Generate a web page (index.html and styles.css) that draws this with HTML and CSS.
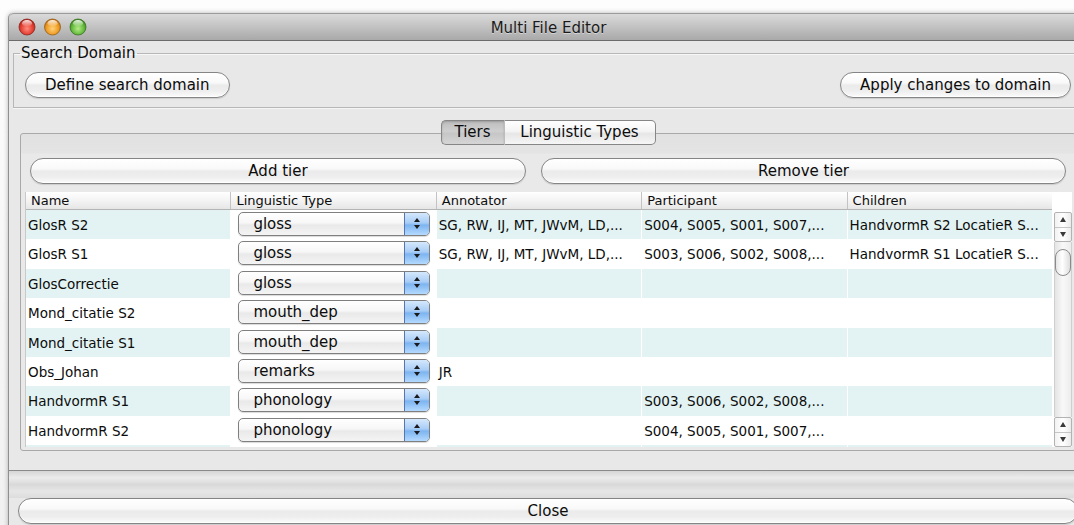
FILE: index.html
```html
<!DOCTYPE html>
<html>
<head>
<meta charset="utf-8">
<title>Multi File Editor</title>
<link rel="stylesheet" href="styles.css">
</head>
<body>
<div class="desktop">
  <div class="window">
    <div class="titlebar">
      <svg class="lights" width="72" height="18" viewBox="0 0 72 18">
        <defs>
          <radialGradient id="lr" cx="50%" cy="60%" r="60%">
            <stop offset="0" stop-color="#ff8a7c"/>
            <stop offset="0.65" stop-color="#e23c2f"/>
            <stop offset="1" stop-color="#a81d14"/>
          </radialGradient>
          <radialGradient id="ly" cx="50%" cy="60%" r="60%">
            <stop offset="0" stop-color="#ffd27a"/>
            <stop offset="0.65" stop-color="#ee9a22"/>
            <stop offset="1" stop-color="#b8690a"/>
          </radialGradient>
          <radialGradient id="lg" cx="50%" cy="60%" r="60%">
            <stop offset="0" stop-color="#b6ec8a"/>
            <stop offset="0.65" stop-color="#62b83a"/>
            <stop offset="1" stop-color="#347e1c"/>
          </radialGradient>
          <linearGradient id="shine" x1="0" y1="0" x2="0" y2="1">
            <stop offset="0" stop-color="#fff" stop-opacity="0.9"/>
            <stop offset="1" stop-color="#fff" stop-opacity="0.05"/>
          </linearGradient>
        </defs>
        <circle cx="9" cy="9" r="8" fill="url(#lr)" stroke="#8c2a22" stroke-width="0.8"/>
        <ellipse cx="9" cy="5.2" rx="5" ry="3.2" fill="url(#shine)"/>
        <circle cx="34.5" cy="9" r="8" fill="url(#ly)" stroke="#94601a" stroke-width="0.8"/>
        <ellipse cx="34.5" cy="5.2" rx="5" ry="3.2" fill="url(#shine)"/>
        <circle cx="60" cy="9" r="8" fill="url(#lg)" stroke="#3c7424" stroke-width="0.8"/>
        <ellipse cx="60" cy="5.2" rx="5" ry="3.2" fill="url(#shine)"/>
      </svg>
      <div class="title">Multi File Editor</div>
      <div></div>
    </div>

    <div class="content">
      <fieldset class="domain">
        <legend>Search Domain</legend>
        <div class="domain-row">
          <button class="aqua">Define search domain</button>
          <button class="aqua">Apply changes to domain</button>
        </div>
      </fieldset>

      <div class="tabbed">
        <div class="tabs">
          <span class="tab selected">Tiers</span>
          <span class="tab">Linguistic Types</span>
        </div>
        <div class="pane">
          <div class="pane-buttons">
            <button class="aqua add">Add tier</button>
            <button class="aqua remove">Remove tier</button>
          </div>

          <div class="table-wrap">
            <div class="thead">
              <div class="th">Name</div>
              <div class="th">Linguistic Type</div>
              <div class="th">Annotator</div>
              <div class="th">Participant</div>
              <div class="th">Children</div>
            </div>
            <div class="corner"></div>

            <div class="tbody">
              <div class="tr striped">
                <div class="td">GlosR S2</div>
                <div class="td combo-cell"><div class="combo"><span class="combo-text">gloss</span><span class="combo-arrows"></span></div></div>
                <div class="td">SG, RW, IJ, MT, JWvM, LD,...</div>
                <div class="td">S004, S005, S001, S007,...</div>
                <div class="td">HandvormR S2 LocatieR S...</div>
              </div>
              <div class="tr">
                <div class="td">GlosR S1</div>
                <div class="td combo-cell"><div class="combo"><span class="combo-text">gloss</span><span class="combo-arrows"></span></div></div>
                <div class="td">SG, RW, IJ, MT, JWvM, LD,...</div>
                <div class="td">S003, S006, S002, S008,...</div>
                <div class="td">HandvormR S1 LocatieR S...</div>
              </div>
              <div class="tr striped">
                <div class="td">GlosCorrectie</div>
                <div class="td combo-cell"><div class="combo"><span class="combo-text">gloss</span><span class="combo-arrows"></span></div></div>
                <div class="td"></div>
                <div class="td"></div>
                <div class="td"></div>
              </div>
              <div class="tr">
                <div class="td">Mond_citatie S2</div>
                <div class="td combo-cell"><div class="combo"><span class="combo-text">mouth_dep</span><span class="combo-arrows"></span></div></div>
                <div class="td"></div>
                <div class="td"></div>
                <div class="td"></div>
              </div>
              <div class="tr striped">
                <div class="td">Mond_citatie S1</div>
                <div class="td combo-cell"><div class="combo"><span class="combo-text">mouth_dep</span><span class="combo-arrows"></span></div></div>
                <div class="td"></div>
                <div class="td"></div>
                <div class="td"></div>
              </div>
              <div class="tr">
                <div class="td">Obs_Johan</div>
                <div class="td combo-cell"><div class="combo"><span class="combo-text">remarks</span><span class="combo-arrows"></span></div></div>
                <div class="td">JR</div>
                <div class="td"></div>
                <div class="td"></div>
              </div>
              <div class="tr striped">
                <div class="td">HandvormR S1</div>
                <div class="td combo-cell"><div class="combo"><span class="combo-text">phonology</span><span class="combo-arrows"></span></div></div>
                <div class="td"></div>
                <div class="td">S003, S006, S002, S008,...</div>
                <div class="td"></div>
              </div>
              <div class="tr">
                <div class="td">HandvormR S2</div>
                <div class="td combo-cell"><div class="combo"><span class="combo-text">phonology</span><span class="combo-arrows"></span></div></div>
                <div class="td"></div>
                <div class="td">S004, S005, S001, S007,...</div>
                <div class="td"></div>
              </div>
              <div class="tr striped">
                <div class="td"></div>
                <div class="td combo-cell"><div class="combo"><span class="combo-text"></span><span class="combo-arrows"></span></div></div>
                <div class="td"></div>
                <div class="td"></div>
                <div class="td"></div>
              </div>
            </div>

            <div class="vscroll">
              <div class="sb-arrows"><span class="sb-btn up"></span><span class="sb-btn down"></span></div>
              <div class="sb-track"><div class="sb-thumb"></div></div>
              <div class="sb-arrows"><span class="sb-btn up"></span><span class="sb-btn down"></span></div>
            </div>
          </div>
        </div>
      </div>

      <div class="divider"></div>

      <div class="footer">
        <button class="aqua close">Close</button>
      </div>
    </div>
  </div>
</div>
</body>
</html>
```

FILE: styles.css
```css
* {
  box-sizing: border-box;
}

html,
body {
  margin: 0;
  height: 100%;
}

body {
  overflow: hidden;
  background: linear-gradient(#fdfdfd, #f1f1f1);
  font-family: "DejaVu Sans", "Liberation Sans", sans-serif;
  color: #0c0c0c;
}

.desktop {
  padding: 13px 0 0 8px;
}

/* ---------- window frame ---------- */

.window {
  width: 1080px;
  height: 540px;
  border-left: 1px solid #8f8f8f;
  border-radius: 5px 5px 0 0;
  background: #e8e8e8;
  box-shadow: 0 0 5px rgba(0, 0, 0, 0.28);
  overflow: hidden;
}

.titlebar {
  display: grid;
  grid-template-columns: 1fr auto 1fr;
  align-items: center;
  height: 28px;
  border-top: 1px solid #9b9b9b;
  border-bottom: 1px solid #6c6c6c;
  border-radius: 5px 5px 0 0;
  background: linear-gradient(#dadada, #c4c4c4 45%, #a9a9a9);
}

.lights {
  display: block;
  margin-left: 9px;
}

.title {
  padding-top: 1px;
  font-size: 15px;
  color: #1a1a1a;
  text-shadow: 0 1px 0 rgba(255, 255, 255, 0.45);
}

/* ---------- search domain group ---------- */

.domain {
  margin: 3px 5px 0 4px;
  padding: 0 11px 9px;
  border: 1px solid #b7b7b7;
  box-shadow: inset 0 1px 0 #f7f7f7, 0 1px 0 #f6f6f6;
}

.domain legend {
  margin-left: -5px;
  padding: 0 1px;
  font-size: 15px;
  line-height: 19px;
}

.domain-row {
  display: flex;
  justify-content: space-between;
  margin-top: 9px;
}

/* ---------- aqua push buttons ---------- */

.aqua {
  height: 26px;
  padding: 0 19px;
  border: 1px solid #858585;
  border-radius: 13px;
  background: linear-gradient(#ffffff 0%, #f9f9f9 40%, #ebebeb 52%, #eeeeee 75%, #fbfbfb 100%);
  box-shadow: inset 0 -1px 0 #ffffff, 0 1px 1px rgba(0, 0, 0, 0.12);
  font-family: inherit;
  font-size: 15px;
  line-height: 22px;
  color: #0c0c0c;
}

/* ---------- tabbed pane ---------- */

.tabbed {
  margin: 12px 12px 0 11px;
}

.tabs {
  position: relative;
  z-index: 1;
  display: flex;
  justify-content: center;
}

.tab {
  height: 25px;
  border: 1px solid #868686;
  background: linear-gradient(#ffffff, #f4f4f4 45%, #e6e6e6 55%, #f6f6f6);
  font-size: 15px;
  line-height: 23px;
  text-align: center;
  color: #0c0c0c;
}

.tab + .tab {
  width: 152px;
  border-left: 1px solid #bdbdbd;
  border-radius: 0 5px 5px 0;
}

.tab.selected {
  width: 63px;
  border-right: none;
  border-radius: 5px 0 0 5px;
  background: linear-gradient(#bdbdbd, #cfcfcf 45%, #c6c6c6 55%, #d6d6d6);
  box-shadow: inset 0 1px 2px rgba(0, 0, 0, 0.18);
}

.pane {
  margin-top: -12px;
  padding: 24px 4px 3px;
  border: 1px solid #a9a9a9;
  border-radius: 3px;
  background: linear-gradient(#e1e1e1, #e4e4e4 19px, #e9e9e9 20px, #e9e9e9);
}

.pane-buttons {
  display: flex;
  gap: 15px;
  padding: 0 5px;
}

.pane-buttons .add {
  width: 496px;
}

.pane-buttons .remove {
  width: 525px;
}

/* ---------- tier table ---------- */

.table-wrap {
  display: grid;
  grid-template-columns: 1026px 20px;
  grid-template-rows: 18px 237px;
  margin-top: 8px;
  background: #ffffff;
  border-left: 1px solid #c9c9c9;
}

.thead {
  display: grid;
  grid-template-columns: repeat(5, 1fr);
  column-gap: 1px;
  background: #c3c3c3;
  border-bottom: 1px solid #b4b4b4;
}

.th {
  padding: 0 5px;
  background: linear-gradient(#ffffff, #f4f4f4 50%, #e6e6e6);
  font-size: 13px;
  line-height: 17px;
  white-space: nowrap;
  overflow: hidden;
}

.corner {
  background: #ffffff;
}

.tbody {
  overflow: hidden;
  background: #ffffff;
}

.tr {
  display: grid;
  grid-template-columns: repeat(5, 1fr);
  column-gap: 1px;
  height: 29.4px;
}

.tr.striped .td {
  background: #e3f3f3;
}

.tr.striped .td.combo-cell,
.td.combo-cell {
  background: #ffffff;
}

.td {
  padding: 0 2px;
  font-size: 13.5px;
  line-height: 31px;
  white-space: nowrap;
  overflow: hidden;
}

.td.combo-cell {
  padding: 2px 6px 0 7px;
}

/* aqua popup inside the Linguistic Type cells */

.combo {
  display: flex;
  height: 24px;
  border: 1px solid #7f7f7f;
  border-radius: 5px;
  background: linear-gradient(#ffffff, #f7f7f7 45%, #e9e9e9 55%, #f4f4f4);
  box-shadow: 0 1px 1px rgba(0, 0, 0, 0.15);
  overflow: hidden;
}

.combo-text {
  flex: 1;
  padding-left: 14px;
  font-size: 15px;
  line-height: 22px;
}

.combo-arrows {
  position: relative;
  width: 25px;
  border-left: 1px solid #5776b0;
  background: linear-gradient(#d4e8fc, #a8cdf6 45%, #7db4f0 55%, #b4daff);
}

.combo-arrows::before,
.combo-arrows::after {
  content: "";
  position: absolute;
  left: 9px;
  border-left: 3.5px solid transparent;
  border-right: 3.5px solid transparent;
}

.combo-arrows::before {
  top: 5px;
  border-bottom: 4px solid #1a1a1a;
}

.combo-arrows::after {
  top: 12px;
  border-top: 4px solid #1a1a1a;
}

/* ---------- vertical scroll bar ---------- */

.vscroll {
  display: flex;
  flex-direction: column;
  padding: 2px 0 0 2px;
  background: #ffffff;
}

.sb-arrows {
  display: flex;
  flex-direction: column;
  border: 1px solid #b3b3b3;
  border-radius: 2px;
  background: linear-gradient(90deg, #f2f2f2, #ffffff 50%, #ebebeb);
}

.sb-btn {
  position: relative;
  height: 14px;
}

.sb-btn + .sb-btn {
  border-top: 1px solid #c6c6c6;
}

.sb-btn::after {
  content: "";
  position: absolute;
  left: 5px;
  border-left: 3.5px solid transparent;
  border-right: 3.5px solid transparent;
}

.sb-btn.up::after {
  top: 4px;
  border-bottom: 5px solid #3a3a3a;
}

.sb-btn.down::after {
  top: 4px;
  border-top: 5px solid #3a3a3a;
}

.sb-track {
  flex: 1;
  padding: 7px 0;
  border-left: 1px solid #cfcfcf;
  border-right: 1px solid #cfcfcf;
  background: linear-gradient(90deg, #e4e4e4, #f8f8f8 50%, #ececec);
}

.sb-thumb {
  height: 27px;
  border: 1px solid #8a8a8a;
  border-radius: 8px;
  background: linear-gradient(90deg, #e6e6e6, #ffffff 45%, #dddddd);
}

/* ---------- bottom bar ---------- */

.divider {
  height: 28px;
  margin-top: 19px;
  border-top: 1px solid #8b8b8b;
  background: linear-gradient(#d6d6d6, #ececec 25%, #d9d9d9 50%, #e6e6e6 75%, #dcdcdc);
}

.footer {
  padding: 0 10px 0 9px;
}

.footer .close {
  width: 100%;
}
```
